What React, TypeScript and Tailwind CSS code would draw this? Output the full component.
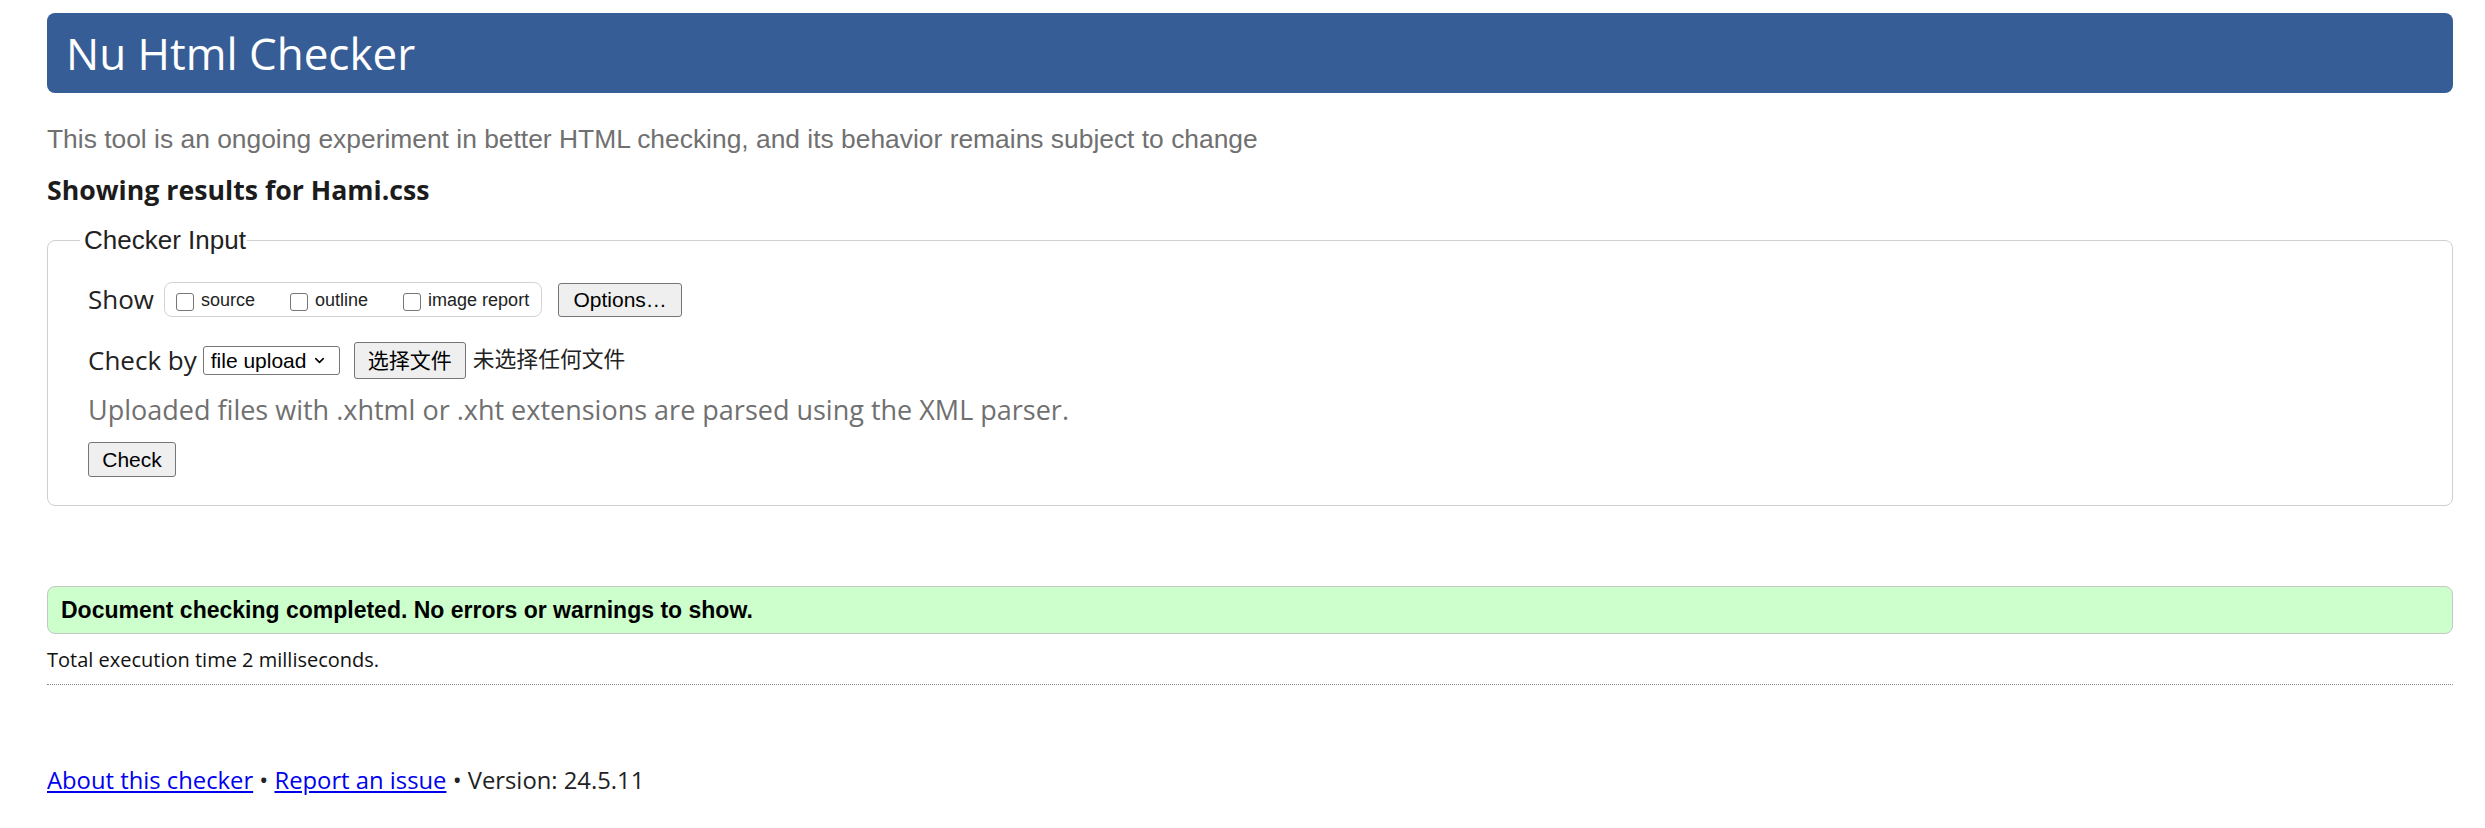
import { ChevronDown } from "lucide-react";

const sans = "font-['Open_Sans',sans-serif]";
const arial = "font-['Liberation_Sans',Arial,sans-serif]";
const cjk = "font-['Liberation_Sans','Noto_Sans_CJK_SC',sans-serif]";

const Box = ({ label }: { label: string }) => (
    <span className="flex items-center">
        <span className="mb-[-4px] h-[18px] w-[18px] rounded-[3px] border border-[#767676] bg-white" />
        <span className={`${arial} ml-[7px] text-[18px] leading-[22px] text-[#222]`}>{label}</span>
    </span>
);

const Button = ({ children, className }: { children: React.ReactNode; className?: string }) => (
    <button
        type="button"
        className={`rounded-[3px] border border-[#767676] bg-[#efefef] text-[21px] text-black ${className ?? ""}`}
    >
        {children}
    </button>
);

export default function App() {
    return (
        <div className="min-h-screen bg-white pl-[47px] pr-[32px] pt-[13px]">
            {/* Header */}
            <h1
                className={`${sans} flex h-[80px] items-center rounded-[8px] bg-[#365d95] pl-[19px] text-[44px] leading-none text-white`}
            >
                Nu Html Checker
            </h1>

            <p className={`${arial} mt-[31px] text-[26.4px] leading-[30px] text-[#707070]`}>
                This tool is an ongoing experiment in better HTML checking, and its behavior remains
                subject to change
            </p>

            <p className={`${sans} mt-[19px] text-[26.7px] font-bold leading-[34px] text-[#1c1c1c]`}>
                Showing results for Hami.css
            </p>

            {/* Checker Input */}
            <fieldset className="mt-[18px] rounded-[8px] border border-[#cfcfcf]">
                <legend className={`${arial} ml-[32px] pl-[4px] pr-[1px] text-[26px] leading-[30px] text-[#222]`}>
                    Checker Input
                </legend>
                <div className="pb-[28px] pl-[40px] pt-[27px]">
                    <div className="flex h-[35px] items-center">
                        <span className={`${sans} text-[26px] text-[#222]`}>Show</span>
                        <div className="ml-[10px] flex h-[35px] items-center gap-[35px] rounded-[8px] border border-[#d3d3d3] pl-[11px] pr-[12px]">
                            <Box label="source" />
                            <Box label="outline" />
                            <Box label="image report" />
                        </div>
                        <Button className={`${arial} ml-[16px] h-[34px] w-[124px]`}>Options…</Button>
                    </div>

                    <div className="mt-[25px] flex h-[37px] items-center">
                        <span className={`${sans} text-[26px] text-[#222]`}>Check by</span>
                        <div className="ml-[6px] flex h-[29px] w-[137px] items-center justify-between rounded-[3px] border border-[#767676] bg-white pl-[7px] pr-[12px]">
                            <span className={`${arial} text-[21px] text-black`}>file upload</span>
                            <ChevronDown className="h-[15px] w-[15px] text-black" strokeWidth={2.5} />
                        </div>
                        <Button className={`${cjk} ml-[14px] h-[37px] w-[112px]`}>选择文件</Button>
                        <span className={`${cjk} ml-[7px] text-[21.8px] text-[#222]`}>未选择任何文件</span>
                    </div>

                    <p className={`${sans} mt-[13px] text-[27px] leading-[36px] text-[#707070]`}>
                        Uploaded files with .xhtml or .xht extensions are parsed using the XML parser.
                    </p>

                    <Button className={`${arial} mt-[14px] h-[35px] w-[88px]`}>Check</Button>
                </div>
            </fieldset>

            {/* Result */}
            <div className="mt-[80px] flex h-[48px] items-center rounded-[8px] border border-[#c6c6c6] bg-[#ccffcc] pl-[13px]">
                <span className={`${arial} text-[23px] font-bold text-black`}>
                    Document checking completed. No errors or warnings to show.
                </span>
            </div>

            <p className={`${sans} mt-[11px] text-[20px] leading-[30px] text-[#111]`}>
                Total execution time 2 milliseconds.
            </p>

            <div className="mt-[9px] border-t border-dotted border-[#8a8a8a]" />

            {/* Footer */}
            <p className={`${sans} mt-[79px] text-[23.8px] leading-[32px] text-[#222]`}>
                <a href="#" className="text-[#0000ee] underline">
                    About this checker
                </a>{" "}
                •{" "}
                <a href="#" className="text-[#0000ee] underline">
                    Report an issue
                </a>{" "}
                • Version: 24.5.11
            </p>
        </div>
    );
}
